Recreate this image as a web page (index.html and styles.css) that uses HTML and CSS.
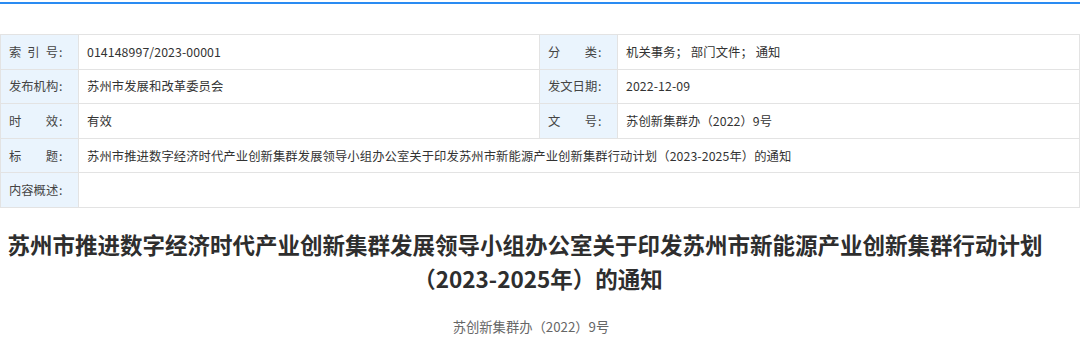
FILE: index.html
```html
<!DOCTYPE html>
<html lang="zh-CN">
<head>
<meta charset="utf-8">
<title>苏州市推进数字经济时代产业创新集群发展领导小组办公室关于印发苏州市新能源产业创新集群行动计划（2023-2025年）的通知</title>
<link rel="stylesheet" href="styles.css">
</head>
<body>
<div class="topbar"></div>
<table class="meta">
  <colgroup>
    <col class="c-label"><col class="c-val"><col class="c-label"><col class="c-val2">
  </colgroup>
  <tr>
    <th><span class="lb">索引号</span>:</th>
    <td>014148997/2023-00001</td>
    <th><span class="lb">分类</span>:</th>
    <td>机关事务；&nbsp;部门文件；&nbsp;通知</td>
  </tr>
  <tr>
    <th><span class="lb">发布机构</span>:</th>
    <td>苏州市发展和改革委员会</td>
    <th><span class="lb">发文日期</span>:</th>
    <td>2022-12-09</td>
  </tr>
  <tr>
    <th><span class="lb">时效</span>:</th>
    <td>有效</td>
    <th><span class="lb">文号</span>:</th>
    <td>苏创新集群办（2022）9号</td>
  </tr>
  <tr>
    <th><span class="lb">标题</span>:</th>
    <td colspan="3">苏州市推进数字经济时代产业创新集群发展领导小组办公室关于印发苏州市新能源产业创新集群行动计划（2023-2025年）的通知</td>
  </tr>
  <tr>
    <th><span class="lb">内容概述</span>:</th>
    <td colspan="3"></td>
  </tr>
</table>
<div class="article">
  <h1 class="title"><span class="line1">苏州市推进数字经济时代产业创新集群发展领导小组办公室关于印发苏州市新能源产业创新集群行动计划</span><span class="line2">（2023-2025年）的通知</span></h1>
  <p class="docno">苏创新集群办（2022）9号</p>
</div>
</body>
</html>
```
FILE: styles.css
```css
html, body {
  margin: 0;
  padding: 0;
  background: #fff;
}
body {
  width: 1080px;
  font-family: "Noto Sans CJK SC", "Microsoft YaHei", sans-serif;
  color: #333;
}
.topbar {
  height: 2px;
  margin-top: 2px;
  background: #2a8bf2;
}
.meta {
  margin-top: 30px;
  width: 1079px;
  table-layout: fixed;
  border-collapse: collapse;
  font-size: 12.3px;
}
.c-label { width: 78px; }
.c-val { width: 461px; }
.c-val2 { width: 462px; }
.meta th, .meta td {
  border: 1px solid #e3e3e3;
  height: 34.6px;
  padding: 0 8px;
  box-sizing: border-box;
  text-align: left;
  vertical-align: middle;
  font-weight: normal;
  white-space: nowrap;
}
.meta td {
  letter-spacing: 0.1px;
}
.meta th {
  background: #eaf4fd;
  color: #444;
}
.lb {
  display: inline-block;
  width: 49px;
  text-align: justify;
  text-align-last: justify;
  margin-right: 1px;
  letter-spacing: 0;
}
.article {
  padding: 19px 18px 0 0;
  text-align: center;
}
.title {
  margin: 0;
  font-size: 22.5px;
  line-height: 34px;
  font-weight: bold;
  color: #2e2e2e;
}
.line1, .line2 {
  display: block;
  white-space: nowrap;
}
.line1 {
  padding-right: 12px;
}
.line2 {
  padding-left: 14px;
}
.docno {
  margin: 22px 0 0;
  font-size: 13.3px;
  line-height: 20px;
  color: #666;
}
```
